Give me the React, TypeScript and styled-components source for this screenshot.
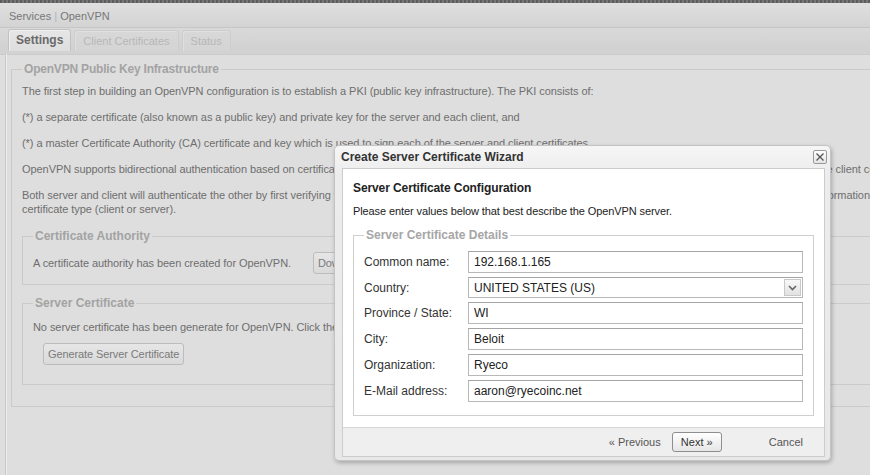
import styled, { createGlobalStyle } from "styled-components";

const GlobalStyle = createGlobalStyle`
  html, body {
    margin: 0;
    padding: 0;
    background: #dedede;
    overflow: hidden;
  }
  body {
    font-family: "Liberation Sans", Tahoma, Arial, sans-serif;
    font-size: 11px;
    color: #6e6e6e;
  }
`;

const Page = styled.div`
  position: relative;
  width: 870px;
  height: 475px;
  overflow: hidden;
  background: #dedede;
`;

const TopStripe = styled.div`
  height: 3px;
  background: repeating-linear-gradient(90deg, #5c5c5c 0 2px, #777 2px 4px);
`;

const Header = styled.div`
  height: 24px;
  line-height: 26px;
  padding-left: 9px;
  background: linear-gradient(#dfdfdf, #d3d3d3);
  border-bottom: 1px solid #c6c6c6;
  color: #777;
  font-size: 11px;
`;

const Sep = styled.span`
  color: #a9b6c4;
`;

const TabStrip = styled.div`
  display: flex;
  align-items: flex-end;
  gap: 3px;
  height: 23px;
  padding-left: 8px;
  background: linear-gradient(#d9d9d9, #d1d1d1);
  border-bottom: 3px solid #d2d2d2;
  box-shadow: 0 1px 0 #cbcbcb;
`;

const Tab = styled.div<{ $active?: boolean }>`
  height: ${(p) => (p.$active ? 22 : 21)}px;
  box-sizing: border-box;
  padding: 0 ${(p) => (p.$active ? 7 : 8)}px;
  line-height: 20px;
  border: 1px solid ${(p) => (p.$active ? "#c2c2c2" : "#cdcdcd")};
  border-bottom: none;
  border-radius: 3px 3px 0 0;
  background: ${(p) =>
    p.$active ? "linear-gradient(#e6e6e6, #dedede)" : "linear-gradient(#d8d8d8, #d4d4d4)"};
  box-shadow: inset 1px 1px 0 ${(p) => (p.$active ? "#eeeeee" : "#e0e0e0")};
  color: ${(p) => (p.$active ? "#6a6a6a" : "#b7b7b7")};
  font-weight: ${(p) => (p.$active ? "bold" : "normal")};
  font-size: ${(p) => (p.$active ? 12 : 11)}px;
`;

const Content = styled.div`
  margin-left: 5px;
  padding-top: 7px;
  width: 1400px;
  border-left: 1px solid #cacaca;
  box-shadow: inset 1px 0 0 #ebebeb;
  min-height: 420px;
  letter-spacing: -0.07px;
`;

const Fieldset = styled.fieldset`
  margin: 0 0 0 5px;
  padding: 0 10px 21px 10px;
  border: 1px solid #cacaca;
  min-inline-size: 0;
`;

const InnerFieldset = styled.fieldset<{ $bottom: number; $top: number }>`
  margin: ${(p) => p.$top}px 0 0 0;
  padding: 0 10px ${(p) => p.$bottom}px 10px;
  border: 1px solid #cacaca;
`;

const Legend = styled.legend<{ $tight?: boolean }>`
  padding: 0 2px;
  font-size: 12px;
  line-height: 16px;
  font-weight: bold;
  color: #a3a3a3;
  letter-spacing: ${(p) => (p.$tight ? "-0.2px" : "0")};
`;

const Para = styled.div`
  margin-top: 7px;
  margin-bottom: 12px;
  & + & {
    margin-top: 0;
  }
  line-height: 14px;
  white-space: nowrap;
  color: #6e6e6e;
`;

const Row = styled.div<{ $top: number }>`
  display: flex;
  align-items: center;
  gap: 22px;
  margin-top: ${(p) => p.$top}px;
  line-height: 14px;
  white-space: nowrap;
`;

const GrayButton = styled.button<{ $indent?: number }>`
  height: 22px;
  margin-left: ${(p) => p.$indent ?? 0}px;
  padding: 0 4px;
  border: 1px solid #bcbcbc;
  border-radius: 3px;
  background: linear-gradient(#e6e6e6, #dadada);
  color: #7a7a7a;
  font-family: inherit;
  font-size: 11px;
  letter-spacing: -0.1px;
`;

/* dialog */

const Dialog = styled.div`
  position: absolute;
  left: 334px;
  top: 145px;
  width: 497px;
  height: 316px;
  box-sizing: border-box;
  padding: 0 5px 3px 7px;
  display: flex;
  flex-direction: column;
  border: 1px solid #c4c4c4;
  border-radius: 5px;
  background: linear-gradient(#f6f6f6, #ececec 30px, #e8e8e8);
  box-shadow: 1px 2px 4px rgba(0, 0, 0, 0.25);
  color: #222;
  font-size: 12px;
`;

const TitleBar = styled.div`
  height: 22px;
  display: flex;
  align-items: center;
  justify-content: space-between;
  margin-left: -1px;
  font-weight: bold;
  color: #333;
`;

const CloseBox = styled.div`
  width: 14px;
  height: 14px;
  box-sizing: border-box;
  margin-right: -2px;
  margin-top: -1px;
  border: 1px solid #9a9a9a;
  border-radius: 2px;
  background: linear-gradient(#ffffff, #e4e4e4);
  display: flex;
  align-items: center;
  justify-content: center;
`;

const Frame = styled.div`
  flex: 1;
  display: flex;
  flex-direction: column;
  border: 1px solid #cccccc;
`;

const Body = styled.div`
  flex: 1;
  background: #fff;
  padding: 12px 10px 0 10px;
`;

const Heading = styled.div`
  font-weight: bold;
  line-height: 14px;
  letter-spacing: -0.1px;
`;

const Intro = styled.div`
  margin-top: 9px;
  line-height: 14px;
  font-size: 11px;
  letter-spacing: -0.1px;
`;

const FormSet = styled.fieldset`
  margin: 9px 0 0 0;
  padding: 0 10px 13px 10px;
  border: 1px solid #cfcfcf;
`;

const FormLegend = styled.legend`
  padding: 0 2px;
  font-size: 12px;
  line-height: 16px;
  font-weight: bold;
  color: #a6a6a6;
`;

const FormRow = styled.div`
  display: flex;
  align-items: center;
  margin-top: 4px;
  &:first-of-type {
    margin-top: 8px;
  }
`;

const Label = styled.div`
  width: 104px;
  flex: none;
  color: #333;
`;

const TextBox = styled.div`
  flex: 1;
  height: 22px;
  box-sizing: border-box;
  padding-left: 5px;
  display: flex;
  align-items: center;
  border: 1px solid #b8b8b8;
  border-top-color: #a4a4a4;
  background: #fff;
  color: #222;
`;

const SelectBox = styled(TextBox)`
  height: 21px;
  padding-right: 1px;
  justify-content: space-between;
`;

const Arrow = styled.div`
  width: 17px;
  height: 17px;
  box-sizing: border-box;
  border: 1px solid #c8c8c8;
  background: linear-gradient(#f8f8f8, #e2e2e2);
  display: flex;
  align-items: center;
  justify-content: center;
`;

const Footer = styled.div`
  height: 28px;
  display: flex;
  align-items: center;
  justify-content: flex-end;
  gap: 11px;
  padding-right: 21px;
  background: #efefef;
  border-top: 1px solid #d6d6d6;
  color: #444;
  font-size: 11px;
`;

const LinkButton = styled.span`
  color: #555;
`;

const NextButton = styled.button`
  width: 50px;
  height: 20px;
  margin-right: 36px;
  padding: 0;
  border: 1px solid #8e8e8e;
  border-radius: 3px;
  background: linear-gradient(#ffffff, #e6e6e6);
  color: #333;
  font-family: inherit;
  font-size: 11px;
`;

const fields = [
  { label: "Common name:", value: "192.168.1.165" },
  { label: "Country:", value: "UNITED STATES (US)", select: true },
  { label: "Province / State:", value: "WI" },
  { label: "City:", value: "Beloit" },
  { label: "Organization:", value: "Ryeco" },
  { label: "E-Mail address:", value: "aaron@ryecoinc.net" },
];

export default function App() {
  return (
    <Page>
      <GlobalStyle />
      <TopStripe />
      <Header>
        Services <Sep>|</Sep> OpenVPN
      </Header>
      <TabStrip>
        <Tab $active>Settings</Tab>
        <Tab>Client Certificates</Tab>
        <Tab>Status</Tab>
      </TabStrip>
      <Content>
        <Fieldset>
          <Legend $tight>OpenVPN Public Key Infrastructure</Legend>
          <Para>
            The first step in building an OpenVPN configuration is to establish a PKI (public key
            infrastructure). The PKI consists of:
          </Para>
          <Para>
            (*) a separate certificate (also known as a public key) and private key for the server
            and each client, and
          </Para>
          <Para>
            (*) a master Certificate Authority (CA) certificate and key which is used to sign each
            of the server and client certificates.
          </Para>
          <Para>
            OpenVPN supports bidirectional authentication based on certificates, meaning that the
            client must authenticate the server certificate and the server must authenticate the
            client certificate before mutual trust is established.
          </Para>
          <Para>
            Both server and client will authenticate the other by first verifying that the presented
            certificate was signed by the master certificate authority (CA), and then by testing
            information in the now-authenticated certificate header, such as the certificate common
            name or
            <br />
            certificate type (client or server).
          </Para>
          <InnerFieldset $top={12} $bottom={10}>
            <Legend>Certificate Authority</Legend>
            <Row $top={8}>
              <span>A certificate authority has been created for OpenVPN.</span>
              <GrayButton>Download Certificate Authority</GrayButton>
            </Row>
          </InnerFieldset>
          <InnerFieldset $top={10} $bottom={19}>
            <Legend>Server Certificate</Legend>
            <Row $top={9}>
              <span>
                No server certificate has been generate for OpenVPN. Click the button below to
                generate one.
              </span>
            </Row>
            <Row $top={9}>
              <GrayButton $indent={10}>Generate Server Certificate</GrayButton>
            </Row>
          </InnerFieldset>
        </Fieldset>
      </Content>

      <Dialog>
        <TitleBar>
          <span>Create Server Certificate Wizard</span>
          <CloseBox>
            <svg width="10" height="10" viewBox="0 0 10 10">
              <path d="M1.5 1.5 L8.5 8.5 M8.5 1.5 L1.5 8.5" stroke="#555" strokeWidth="1.3" />
            </svg>
          </CloseBox>
        </TitleBar>
        <Frame>
          <Body>
            <Heading>Server Certificate Configuration</Heading>
            <Intro>Please enter values below that best describe the OpenVPN server.</Intro>
            <FormSet>
              <FormLegend>Server Certificate Details</FormLegend>
              {fields.map((f) => (
                <FormRow key={f.label}>
                  <Label>{f.label}</Label>
                  {f.select ? (
                    <SelectBox>
                      <span>{f.value}</span>
                      <Arrow>
                        <svg width="9" height="6" viewBox="0 0 9 6">
                          <path d="M1 1 L4.5 4.5 L8 1" fill="none" stroke="#666" strokeWidth="1.6" />
                        </svg>
                      </Arrow>
                    </SelectBox>
                  ) : (
                    <TextBox>{f.value}</TextBox>
                  )}
                </FormRow>
              ))}
            </FormSet>
          </Body>
          <Footer>
            <LinkButton>« Previous</LinkButton>
            <NextButton>Next »</NextButton>
            <LinkButton>Cancel</LinkButton>
          </Footer>
        </Frame>
      </Dialog>
    </Page>
  );
}
